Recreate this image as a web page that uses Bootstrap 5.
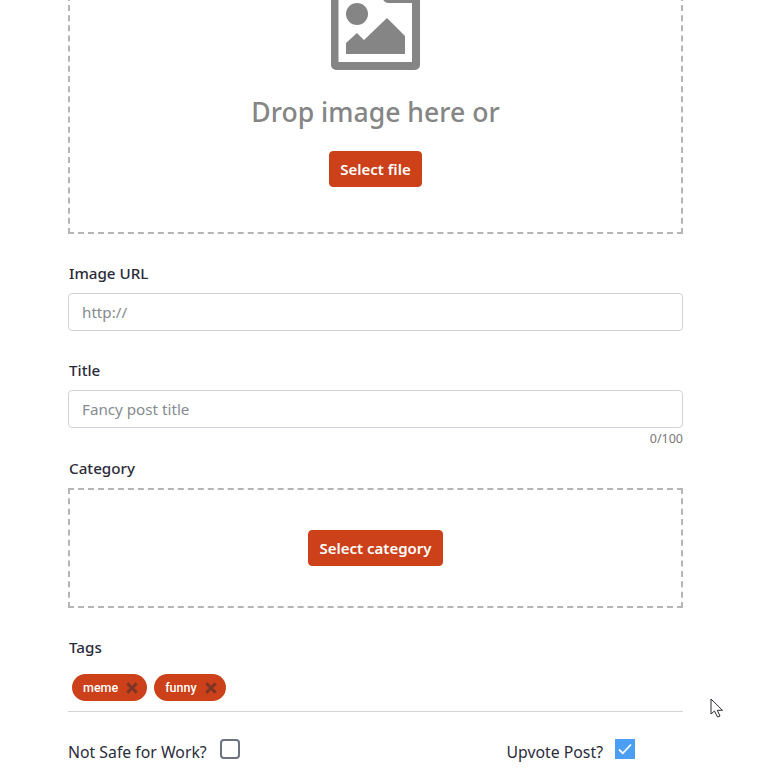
<!DOCTYPE html>
<html lang="en"><head><meta charset="utf-8"><title>Post</title>
<link rel="stylesheet" href="https://cdn.jsdelivr.net/npm/bootstrap@5.3.0/dist/css/bootstrap.min.css">
<style>
html,body{height:768px;overflow:hidden;background:#fff}
body{font-family:"Noto Sans","Open Sans","Liberation Sans",sans-serif;color:#2b2b3a;position:relative}
.pg{width:615px;margin:-76px 0 0 68px}
.zone{border:2px dashed #b5b5b5;display:flex;flex-direction:column;align-items:center}
.zone-img{height:310px;padding-top:40px}
.zone-cat{height:120px;justify-content:center}
.pic{width:89px;height:104px;display:block;fill:#858585}
.drop{font-size:26.600px;font-weight:500;color:#858585;line-height:34px;margin:25px 0 22px}
.act{--bs-btn-bg:#cc4119;--bs-btn-border-color:#cc4119;--bs-btn-hover-bg:#cc4119;--bs-btn-hover-border-color:#cc4119;--bs-btn-color:#fff;--bs-btn-hover-color:#fff;height:36px;font-size:15px;font-weight:600;padding:0 10px;line-height:34px;border-radius:4px}
.fl{font-size:15.200px;font-weight:500;line-height:20px;margin:0 0 10px 1px;display:block;color:#2b2b3a}
.fc{height:38px;font-size:15.200px;padding:0 13px;border-color:#ced4da;border-radius:4px}
.fc::placeholder{color:#858b91}
.cnt{font-size:12.500px;line-height:16px;text-align:right;color:#777;margin:3px 0 11px}
.sec{margin-top:29px}
.sec2{margin-top:29px}
.chiprow{margin-top:17px;padding:0 0 10px 4px;border-bottom:1px solid #d3d3d8;display:flex;gap:7px}
.chip{height:27px;border-radius:14px;background:#cc4119;color:#fff;font:500 12.500px/27px Roboto,"Liberation Sans",sans-serif;padding:0 9px 0 11px;display:flex;align-items:center;gap:8px}
.chip svg{width:12px;height:12px;fill:#7b3524}
.chk{display:flex;justify-content:space-between;margin-top:29px;padding-right:48px}
.chk label{display:flex;align-items:flex-start;gap:13px;font-size:15.800px;font-weight:400;line-height:20px;padding-top:1px}
.chk label:last-child{gap:12px}
.box{width:20px;height:20px;margin:-3px 0 0;border:2px solid #6b7280;border-radius:3px;box-shadow:none!important}
.box[type=checkbox]:checked{background-color:#4a9ff5;border-color:#4a9ff5;border-radius:0;background-size:100% 100%;--bs-form-check-bg-image:url("data:image/svg+xml,%3csvg xmlns='http://www.w3.org/2000/svg' viewBox='0 0 16 16'%3e%3cpath fill='none' stroke='%23fff' stroke-width='1.800' d='M2 8.500l3.800 3.800L14 3.500'/%3e%3c/svg%3e")}
.ptr{position:absolute;left:710px;top:698px;width:14px;height:20px}
</style></head><body>
<main class="pg">
<div class="zone zone-img">
<svg class="pic" viewBox="0 0 89 104"><path fill-rule="evenodd" d="M5 0H60L89 30V99a5 5 0 0 1-5 5H5a5 5 0 0 1-5-5V5a5 5 0 0 1 5-5ZM7.500 7.500V96H81V37H57a5 5 0 0 1-5-5V7.500Z"/><circle cx="26" cy="48" r="11"/><path d="M15 88V77L26 67 33 74 56 52 74 70V88Z"/></svg>
<div class="drop">Drop image here or</div>
<button type="button" class="btn act">Select file</button>
</div>
<div class="sec"><label class="fl" for="u">Image URL</label><input id="u" class="form-control fc" placeholder="http://"></div>
<div class="sec"><label class="fl" for="t">Title</label><input id="t" class="form-control fc" placeholder="Fancy post title"><div class="cnt">0/100</div></div>
<div><span class="fl">Category</span><div class="zone zone-cat"><button type="button" class="btn act">Select category</button></div></div>
<div class="sec2"><span class="fl">Tags</span>
<div class="chiprow"><span class="chip">meme<svg viewBox="0 0 11 11"><path d="M2.200.3 5.500 3.600 8.800.3 10.700 2.200 7.400 5.500 10.700 8.800 8.800 10.700 5.500 7.400 2.200 10.700.3 8.800 3.600 5.500.3 2.200Z"/></svg></span><span class="chip">funny<svg viewBox="0 0 11 11"><path d="M2.200.3 5.500 3.600 8.800.3 10.700 2.200 7.400 5.500 10.700 8.800 8.800 10.700 5.500 7.400 2.200 10.700.3 8.800 3.600 5.500.3 2.200Z"/></svg></span></div></div>
<div class="chk"><label>Not Safe for Work?<input type="checkbox" class="form-check-input box"></label><label>Upvote Post?<input type="checkbox" class="form-check-input box" checked></label></div>
</main>
<svg class="ptr" viewBox="0 0 14 20"><path d="M1 1V16L4.500 13 7.500 19 10 18 7.300 12.300H12.500Z" fill="#fff" stroke="#2b2b3a" stroke-width="1"/></svg>
</body></html>
